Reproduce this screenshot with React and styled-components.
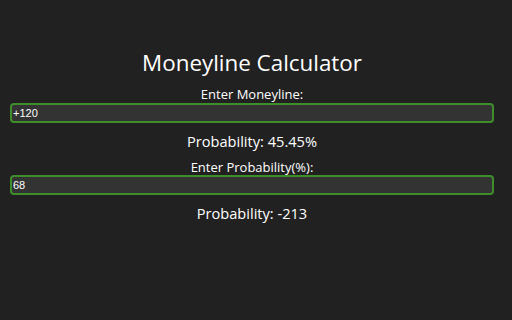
import React from "react";
import styled, { createGlobalStyle } from "styled-components";

const Global = createGlobalStyle`
  html, body {
    margin: 0;
    padding: 0;
    background-color: #212121;
  }
  body {
    width: 512px;
    height: 320px;
    font-family: "Open Sans", "Noto Sans", sans-serif;
    color: #ffffff;
  }
`;

const Page = styled.div`
  display: flex;
  flex-direction: column;
  align-items: center;
  padding: 48px 18px 0 10px;
`;

const Title = styled.h1`
  font-size: 22.4px;
  font-weight: 400;
  margin: 0 0 8px 0;
  line-height: 30px;
`;

const Label = styled.label`
  font-size: 13px;
  line-height: 16px;
  margin-bottom: ${(p) => p.$gap || "0"};
`;

const Field = styled.input`
  box-sizing: border-box;
  width: 100%;
  height: 20px;
  background-color: #333333;
  border: 2px solid #3f8d2a;
  border-radius: 4px;
  color: #ffffff;
  font-family: "Liberation Sans", Arial, sans-serif;
  font-size: 11px;
  padding: 0 1px;
  outline: none;
`;

const Result = styled.div`
  font-size: 14.6px;
  line-height: 20px;
  margin: ${(p) => p.$margin};
`;

function App() {
  return (
    <>
      <Global />
      <Page>
        <Title>Moneyline Calculator</Title>
        <Label $gap="1px">Enter Moneyline:</Label>
        <Field defaultValue="+120" />
        <Result $margin="8px 0 8px 0">Probability: 45.45%</Result>
        <Label>Enter Probability(%):</Label>
        <Field defaultValue="68" />
        <Result $margin="8px 0 0 0">Probability: -213</Result>
      </Page>
    </>
  );
}

export default App;
